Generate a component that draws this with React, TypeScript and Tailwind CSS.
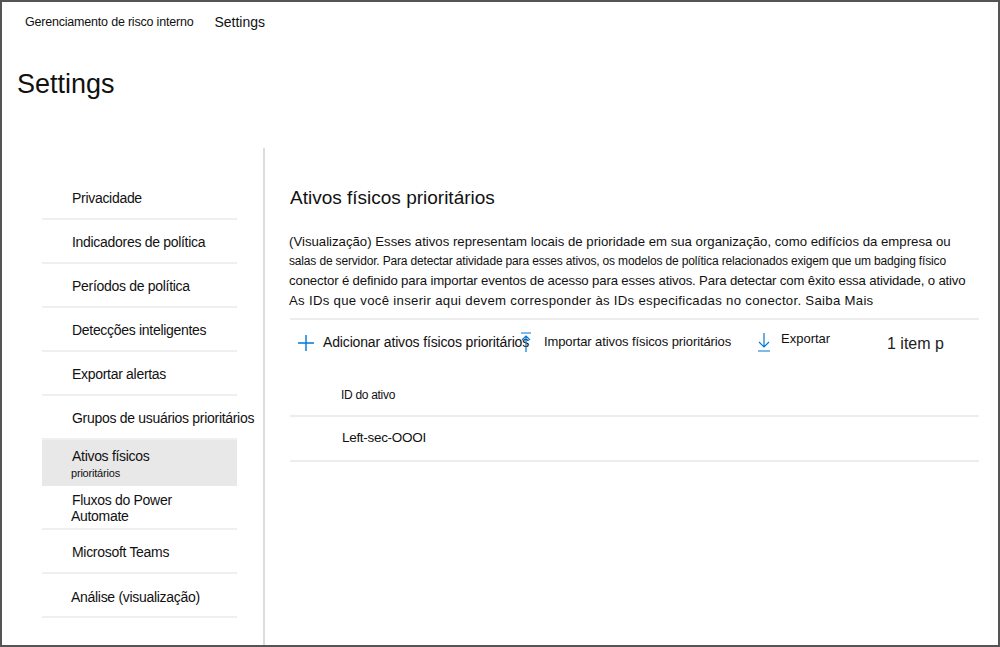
import React from "react";

const navItems = [
  "Privacidade",
  "Indicadores de política",
  "Períodos de política",
  "Detecções inteligentes",
  "Exportar alertas",
  "Grupos de usuários prioritários",
];

export default function App() {
  return (
    <div
      className="w-[1000px] h-[647px] bg-white border-2 border-[#555555] flex flex-col overflow-hidden text-[#111111]"
      style={{ fontFamily: '"Liberation Sans", Arial, sans-serif' }}
    >
      {/* breadcrumb */}
      <div className="h-[40px] flex items-center pl-[23px] shrink-0">
        <span className="text-[12.5px] tracking-[-0.2px]">Gerenciamento de risco interno</span>
        <span className="text-[14px] ml-[21px]">Settings</span>
      </div>
      {/* title */}
      <div className="h-[86px] flex items-center pl-[15px] shrink-0 pb-[2px]">
        <h1 className="text-[27px]">Settings</h1>
      </div>
      <div className="flex flex-1 min-h-0 pt-[20px]">
        {/* nav */}
        <div className="w-[261px] shrink-0 pt-[28px] pl-[40px]">
          <div className="w-[195px] flex flex-col text-[14px] tracking-[-0.3px]">
            {navItems.map((t) => (
              <div
                key={t}
                className="h-[44px] border-b-2 border-[#efefef] flex items-center pl-[30px] pt-[2px] whitespace-nowrap"
              >
                {t}
              </div>
            ))}
            <div className="h-[46px] bg-[#e8e8e8] flex flex-col justify-center pl-[30px] pt-[3px]">
              <span className="leading-[17px]">Ativos físicos</span>
              <span className="text-[11px] leading-[16px] -ml-[1px] tracking-[-0.2px]">prioritários</span>
            </div>
            <div className="h-[44px] border-b-2 border-[#efefef] flex flex-col justify-center pl-[30px] pt-[1px] leading-[16px]">
              <span>Fluxos do Power</span>
              <span className="-ml-[1px]">Automate</span>
            </div>
            <div className="h-[44px] border-b-2 border-[#efefef] flex items-center pl-[30px] pt-[2px]">
              Microsoft Teams
            </div>
            <div className="h-[44px] border-b-2 border-[#efefef] flex items-center pl-[29px] pt-[4px]">
              Análise (visualização)
            </div>
          </div>
        </div>
        {/* divider */}
        <div className="w-[2px] bg-[#dcdcdc] shrink-0" />
        {/* content */}
        <div className="flex-1 pl-[26px] pr-[20px] pt-[37px]">
          <h2 className="text-[19px] -ml-[1px] leading-[26px]">Ativos físicos prioritários</h2>
          <div className="mt-[21px] leading-[19.5px] whitespace-nowrap -ml-[2px]">
            <div className="text-[13.2px]">
              (Visualização) Esses ativos representam locais de prioridade em sua organização, como edifícios da empresa ou
            </div>
            <div className="text-[12px] tracking-[-0.16px]">
              salas de servidor. Para detectar atividade para esses ativos, os modelos de política relacionados exigem que um badging físico
            </div>
            <div className="text-[13.2px] tracking-[-0.15px]">
              conector é definido para importar eventos de acesso para esses ativos. Para detectar com êxito essa atividade, o ativo
            </div>
            <div className="text-[13.2px] tracking-[0.29px]">
              As IDs que você inserir aqui devem corresponder às IDs especificadas no conector. Saiba Mais
            </div>
          </div>
          <div className="mt-[8px] h-[2px] bg-[#ededed] w-[689px] -ml-[1px]" />
          {/* toolbar */}
          <div className="h-[44px] flex items-center relative w-[689px]">
            <svg width="18" height="18" viewBox="0 0 18 18" className="ml-[6px] mt-[2px] shrink-0">
              <path d="M9 1v16M1 9h16" stroke="#0078d4" strokeWidth="1.4" fill="none" />
            </svg>
            <span className="ml-[8px] text-[14px] tracking-[-0.15px] whitespace-nowrap">Adicionar ativos físicos prioritários</span>
            <svg width="12" height="20" viewBox="0 0 12 20" className="absolute left-[229px] top-[12px]">
              <path d="M1 1h10M6 4v16M2 8l4-4 4 4" stroke="#0078d4" strokeWidth="1.2" fill="none" />
            </svg>
            <div className="absolute left-[253px] top-[12px] text-[13px] tracking-[-0.1px] whitespace-nowrap">
              Importar ativos físicos prioritários
            </div>
            <svg width="14" height="20" viewBox="0 0 14 20" className="absolute left-[466px] top-[12px]">
              <path d="M7 1v14M2 10l5 5 5-5M1 19h12" stroke="#0078d4" strokeWidth="1.2" fill="none" />
            </svg>
            <div className="absolute left-[490px] top-[9px] text-[13px]">Exportar</div>
            <div className="absolute left-[596px] top-[12px] text-[16px] text-[#222]">1 item p</div>
          </div>
          {/* table */}
          <div className="w-[689px] -ml-[1px]">
            <div className="h-[53px] flex items-center pl-[51px] pt-[11px] text-[12px] tracking-[-0.3px] border-b-2 border-[#ededed]">
              ID do ativo
            </div>
            <div className="h-[45px] flex items-center pl-[52px] text-[13.5px] tracking-[-0.3px] border-b-2 border-[#ededed]">
              Left-sec-OOOI
            </div>
          </div>
        </div>
      </div>
    </div>
  );
}
